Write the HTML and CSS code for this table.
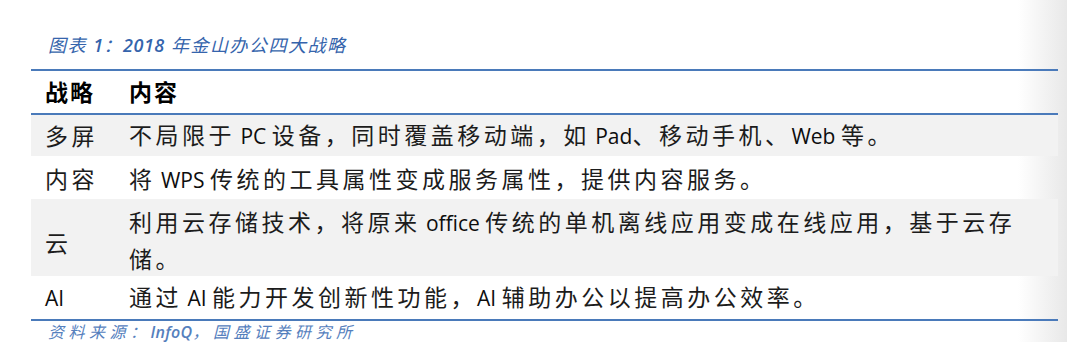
FILE: index.html
```html
<!DOCTYPE html>
<html lang="zh-CN">
<head>
<meta charset="utf-8">
<title>2018 年金山办公四大战略</title>
<link rel="stylesheet" href="styles.css">
</head>
<body>
<div class="sheet">
  <div class="title">图表 <span class="en">1</span>：<span class="en">2018</span> 年金山办公四大战略</div>
  <div class="table">
    <div class="row head">
      <div class="k">战略</div>
      <div class="v">内容</div>
    </div>
    <div class="row alt r1">
      <div class="k">多屏</div>
      <div class="v">不局限于<span class="en"> PC </span>设备，同时覆盖移动端，如<span class="en"> Pad</span>、移动手机、<span class="en">Web </span>等。</div>
    </div>
    <div class="row r2">
      <div class="k">内容</div>
      <div class="v">将<span class="en"> WPS </span>传统的工具属性变成服务属性，提供内容服务。</div>
    </div>
    <div class="row alt r3">
      <div class="k">云</div>
      <div class="v">利用云存储技术，将原来<span class="en"> office </span>传统的单机离线应用变成在线应用，基于云存<br>储。</div>
    </div>
    <div class="row r4">
      <div class="k"><span class="en">AI</span></div>
      <div class="v">通过<span class="en"> AI </span>能力开发创新性功能，<span class="en">AI </span>辅助办公以提高办公效率。</div>
    </div>
  </div>
  <div class="source">资料来源：<span class="en">InfoQ</span>，国盛证券研究所</div>
</div>
</body>
</html>
```
FILE: styles.css
```css
html, body {
  margin: 0;
  padding: 0;
  background: #ffffff;
}

.sheet {
  width: 1067px;
  height: 342px;
  overflow: hidden;
  box-sizing: border-box;
  padding: 0 9px 0 31px;
  background: linear-gradient(to right, #ffffff 0, #ffffff 1018px, #e8e8e8 1067px);
  font-family: "Open Sans", "Noto Sans CJK SC", sans-serif;
  color: #1c1c1c;
}

.title {
  margin: 33px 0 12px 17px;
  height: 24px;
  line-height: 24px;
  font-size: 18px;
  font-style: italic;
  letter-spacing: 1.5px;
  color: #3564ac;
  white-space: nowrap;
}

.title .en {
  font-size: 18px;
  font-weight: 600;
  letter-spacing: 0.5px;
}

.table {
  border-top: 2px solid #4a7aba;
  border-bottom: 2px solid #4a7aba;
}

.row {
  display: grid;
  grid-template-columns: 84px 1fr;
  padding-left: 14px;
  align-items: center;
  font-size: 23px;
  letter-spacing: 3.5px;
  line-height: 36px;
  white-space: nowrap;
}

.row .en {
  font-size: 21px;
  color: #0d0d0d;
  letter-spacing: 0;
}

.alt {
  background: #f2f2f2;
}

.head {
  height: 42px;
  border-bottom: 2px solid #4a7aba;
  font-weight: 700;
  color: #000000;
  font-size: 23px;
  letter-spacing: 2px;
}

.r1 {
  height: 41px;
}

.r2 {
  height: 43px;
  box-sizing: border-box;
  padding-top: 3px;
}

.r3 {
  height: 77px;
  box-sizing: border-box;
  padding-top: 5px;
}

.r3 .k {
  padding-top: 4px;
}

.r4 {
  height: 43px;
}

.source {
  margin-left: 17px;
  line-height: 22px;
  font-size: 16px;
  font-style: italic;
  letter-spacing: 4.5px;
  color: #5580bd;
  white-space: nowrap;
}

.source .en {
  font-size: 16px;
  font-weight: 600;
  letter-spacing: 0.3px;
}
```
